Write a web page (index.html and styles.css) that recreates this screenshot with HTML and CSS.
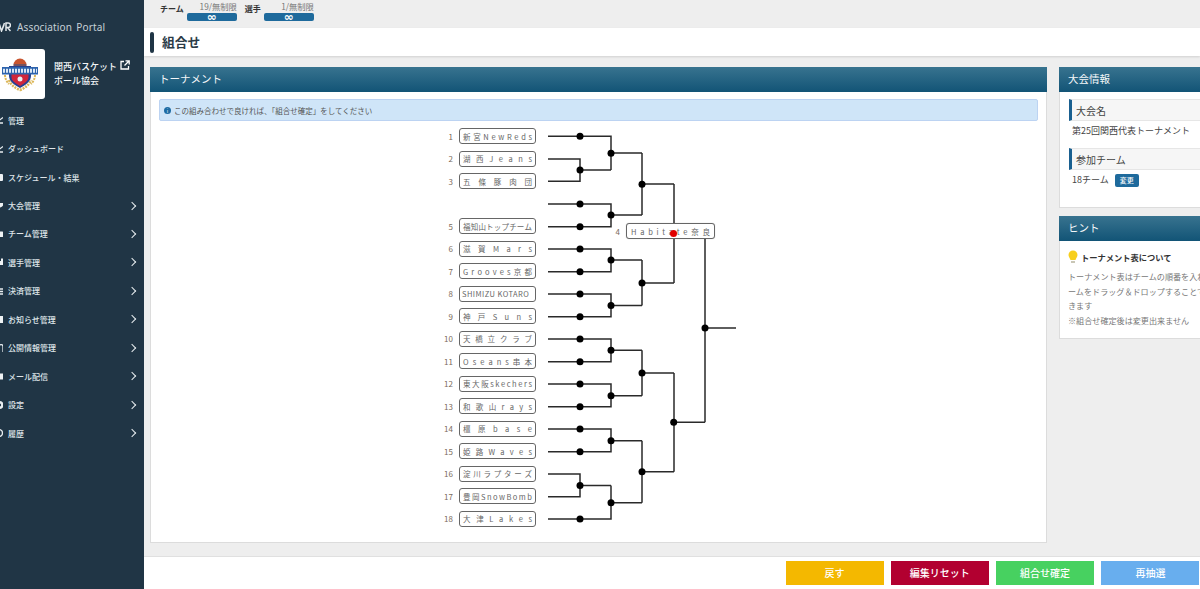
FILE: index.html
```html
<!DOCTYPE html>
<html lang="ja">
<head>
<meta charset="utf-8">
<title>組合せ</title>
<link rel="stylesheet" href="styles.css">
</head>
<body>
<div class="app">
  <aside class="sidebar">
    <div class="brand">
      <svg class="brand-mark" viewBox="0 0 12 10" width="12" height="10"><path d="M0 1l2.500 8 2.500-6M5.500 1l-3 8M7 9V1h2.200a2.200 2.200 0 0 1 0 4.400H7M8.500 5.400L11.500 9" fill="none" stroke="#e4e9ec" stroke-width="1.500"/></svg>
      <span class="brand-name">Association Portal</span>
    </div>
    <div class="org">
      <div class="org-logo">
        <svg viewBox="0 0 36 34" width="36" height="34">
          <path d="M7 22c2 5 6 8 11 10 5-2 9-5 11-10" fill="none" stroke="#dcb75a" stroke-width="2.500" stroke-dasharray="2 1"/>
          <path d="M3 17c0 4 2 7 4 9M33 17c0 4-2 7-4 9" fill="none" stroke="#dcb75a" stroke-width="2" stroke-dasharray="2 1"/>
          <circle cx="18" cy="7" r="6.500" fill="#c9552f"/>
          <path d="M11.500 7h13" stroke="#27528f" stroke-width="1"/>
          <path d="M7 8h22v10c0 5-5 9-11 12-6-3-11-7-11-12z" fill="#27408f"/>
          <path d="M9.500 16h17v3c0 4-4 6-8.500 9-4.500-3-8.500-5-8.500-9z" fill="#d0263b"/>
          <circle cx="18" cy="21" r="2.500" fill="#e8eef5"/>
          <rect x="0" y="9" width="36" height="7.500" fill="#2d63ad"/>
          <path d="M1 12.700h34" stroke="#dbe8f5" stroke-width="4" stroke-dasharray="2 1"/>
        </svg>
      </div>
      <div class="org-name">
        <span>関西バスケット<svg class="ext" viewBox="0 0 10 10" width="10" height="10"><path d="M4 1.500H1v7.500h7.500V6M5.500 .8h3.700v3.700M9 1L4.500 5.500" fill="none" stroke="#fff" stroke-width="1.300"/></svg></span>
        <span>ボール協会</span>
      </div>
    </div>
    <nav class="menu">
      <a class="item"><svg class="ic" viewBox="-5 0 8 8"><path d="M-5 7H3M-1 4.500L3 1.500"/></svg><span>管理</span></a>
      <a class="item"><svg class="ic" viewBox="-5 0 8 8"><path d="M-5 7H3M-1 4.500L3 1.500"/></svg><span>ダッシュボード</span></a>
      <a class="item"><svg class="ic" viewBox="-5 0 8 8"><rect class="fill" x="-4" y="1" width="7" height="7" rx="1"/></svg><span>スケジュール・結果</span></a>
      <a class="item"><svg class="ic" viewBox="-5 0 8 8"><path class="fill" d="M-4 1H3.500C3.500 4 2 5 0 5.500V8H-1V1z"/></svg><span>大会管理</span><b class="chev"></b></a>
      <a class="item"><svg class="ic" viewBox="-5 0 8 8"><rect class="fill" x="-4" y="1.500" width="7" height="5.500" rx=".5"/></svg><span>チーム管理</span><b class="chev"></b></a>
      <a class="item"><svg class="ic" viewBox="-5 0 8 8"><path class="fill" d="M-4 3h5V.5h2V3l1 2-1 2H-4z"/></svg><span>選手管理</span><b class="chev"></b></a>
      <a class="item"><svg class="ic" viewBox="-5 0 8 8"><path d="M-5 2H3.500M-5 4.500H3.500M-5 7H3.500"/></svg><span>決済管理</span><b class="chev"></b></a>
      <a class="item"><svg class="ic" viewBox="-5 0 8 8"><rect class="fill" x="-4" y="1" width="7.500" height="7" rx=".5"/></svg><span>お知らせ管理</span><b class="chev"></b></a>
      <a class="item"><svg class="ic" viewBox="-5 0 8 8"><path d="M-1 8V2.500C-1 0 3 0 3 2.500V8"/></svg><span>公開情報管理</span><b class="chev"></b></a>
      <a class="item"><svg class="ic" viewBox="-5 0 8 8"><path class="fill" d="M-4 1.500H3.500V7.500H-4z"/></svg><span>メール配信</span><b class="chev"></b></a>
      <a class="item"><svg class="ic" viewBox="-5 0 8 8"><circle cx="-.5" cy="4" r="2.800" fill="none" stroke-width="2.400"/></svg><span>設定</span><b class="chev"></b></a>
      <a class="item"><svg class="ic" viewBox="-5 0 8 8"><circle cx="-1" cy="4" r="3.500" fill="none"/></svg><span>履歴</span><b class="chev"></b></a>
    </nav>
  </aside>

  <div class="main">
    <header class="topbar">
      <span class="quota-label">チーム</span>
      <div class="quota"><span class="quota-count">19/無制限</span><span class="pill">∞</span></div>
      <span class="quota-label">選手</span>
      <div class="quota"><span class="quota-count">1/無制限</span><span class="pill">∞</span></div>
    </header>
    <div class="titlebar"><i class="title-mark"></i><h1>組合せ</h1></div>

    <div class="content">
      <section class="panel panel-main">
        <h2 class="panel-head">トーナメント</h2>
        <div class="panel-body">
          <div class="alert"><i class="alert-ic">i</i>この組み合わせで良ければ、「組合せ確定」をしてください</div>
          <div class="bracket-wrap">
            <div class="bracket">
              <svg class="lines" viewBox="440 125 317 405" width="317" height="405">
                <path class="ln" d="M548 136.250H611V170M548 159H580V181.250H548M580 170H611M611 153H642M548 204H611V226.750H548M611 215H642M642 153V215M642 184H674M548 249H611V271.750H548M611 260H642M548 294H611V316.750H548M611 305.500H642M642 260V305.500M642 283H674M674 184V283M705 232V422.300M705 328H736M548 339H611V361.750H548M611 350.300H642M548 384H611V406.750H548M611 395.700H642M642 350.300V395.700M642 373H674M548 429H611V451.750H548M611 440.700H642M548 474H580V496.750H548M580 485.500H611M548 519H611V485.500M611 502.700H642M642 440.700V502.700M642 471.700H674M674 373V471.700M674 422.300H705"/>
                <g class="dots">
                  <circle cx="580" cy="136.250" r="3.500"/><circle cx="580" cy="170" r="3.500"/><circle cx="611" cy="153.300" r="3.500"/>
                  <circle cx="580" cy="204" r="3.500"/><circle cx="580" cy="226.750" r="3.500"/><circle cx="611" cy="215" r="3.500"/><circle cx="642" cy="184.300" r="3.500"/>
                  <circle cx="580" cy="249" r="3.500"/><circle cx="580" cy="271.750" r="3.500"/><circle cx="611" cy="260" r="3.500"/>
                  <circle cx="580" cy="294" r="3.500"/><circle cx="580" cy="316.750" r="3.500"/><circle cx="611" cy="305.500" r="3.500"/><circle cx="642" cy="283" r="3.500"/>
                  <circle cx="705" cy="328" r="3.500"/>
                  <circle cx="580" cy="339" r="3.500"/><circle cx="580" cy="361.750" r="3.500"/><circle cx="611" cy="350.300" r="3.500"/>
                  <circle cx="580" cy="384" r="3.500"/><circle cx="580" cy="406.750" r="3.500"/><circle cx="611" cy="395.700" r="3.500"/><circle cx="642" cy="373" r="3.500"/>
                  <circle cx="580" cy="429" r="3.500"/><circle cx="580" cy="451.750" r="3.500"/><circle cx="611" cy="440.700" r="3.500"/>
                  <circle cx="580" cy="485.500" r="3.500"/><circle cx="580" cy="519" r="3.500"/><circle cx="611" cy="502.700" r="3.500"/><circle cx="642" cy="471.700" r="3.500"/>
                  <circle cx="673.700" cy="422.300" r="3.500"/>
                </g>
              </svg>
              <div class="team-row"><span class="no">1</span><div class="team"><s>新</s><s>宮</s><s>N</s><s>e</s><s>w</s><s>R</s><s>e</s><s>d</s><s>s</s></div></div>
              <div class="team-row"><span class="no">2</span><div class="team"><s>湖</s><s>西</s><s>J</s><s>e</s><s>a</s><s>n</s><s>s</s></div></div>
              <div class="team-row"><span class="no">3</span><div class="team"><s>五</s><s>條</s><s>豚</s><s>肉</s><s>団</s></div></div>
              <div class="team-row"></div>
              <div class="team-row"><span class="no">5</span><div class="team"><s>福</s><s>知</s><s>山</s><s>ト</s><s>ッ</s><s>プ</s><s>チ</s><s>ー</s><s>ム</s></div></div>
              <div class="team-row"><span class="no">6</span><div class="team"><s>滋</s><s>賀</s><s>M</s><s>a</s><s>r</s><s>s</s></div></div>
              <div class="team-row"><span class="no">7</span><div class="team"><s>G</s><s>r</s><s>o</s><s>o</s><s>v</s><s>e</s><s>s</s><s>京</s><s>都</s></div></div>
              <div class="team-row"><span class="no">8</span><div class="team team-fill"><s>SHIMIZU KOTARO</s></div></div>
              <div class="team-row"><span class="no">9</span><div class="team"><s>神</s><s>戸</s><s>S</s><s>u</s><s>n</s><s>s</s></div></div>
              <div class="team-row"><span class="no">10</span><div class="team"><s>天</s><s>橋</s><s>立</s><s>ク</s><s>ラ</s><s>ブ</s></div></div>
              <div class="team-row"><span class="no">11</span><div class="team"><s>O</s><s>s</s><s>e</s><s>a</s><s>n</s><s>s</s><s>串</s><s>本</s></div></div>
              <div class="team-row"><span class="no">12</span><div class="team"><s>東</s><s>大</s><s>阪</s><s>s</s><s>k</s><s>e</s><s>c</s><s>h</s><s>e</s><s>r</s><s>s</s></div></div>
              <div class="team-row"><span class="no">13</span><div class="team"><s>和</s><s>歌</s><s>山</s><s>r</s><s>a</s><s>y</s><s>s</s></div></div>
              <div class="team-row"><span class="no">14</span><div class="team"><s>橿</s><s>原</s><s>b</s><s>a</s><s>s</s><s>e</s></div></div>
              <div class="team-row"><span class="no">15</span><div class="team"><s>姫</s><s>路</s><s>W</s><s>a</s><s>v</s><s>e</s><s>s</s></div></div>
              <div class="team-row"><span class="no">16</span><div class="team"><s>淀</s><s>川</s><s>ラ</s><s>プ</s><s>タ</s><s>ー</s><s>ズ</s></div></div>
              <div class="team-row"><span class="no">17</span><div class="team"><s>豊</s><s>岡</s><s>S</s><s>n</s><s>o</s><s>w</s><s>B</s><s>o</s><s>m</s><s>b</s></div></div>
              <div class="team-row"><span class="no">18</span><div class="team"><s>大</s><s>津</s><s>L</s><s>a</s><s>k</s><s>e</s><s>s</s></div></div>
              <div class="float-team">
                <span class="no">4</span>
                <div class="team team-wide"><s>H</s><s>a</s><s>b</s><s>i</s><s>t</s><s>a</s><s>t</s><s>e</s><s>奈</s><s>良</s></div>
                <i class="red-dot"></i>
              </div>
            </div>
          </div>
        </div>
      </section>

      <div class="side">
        <section class="panel panel-info">
          <h2 class="panel-head">大会情報</h2>
          <div class="panel-body info-body">
            <h3 class="sub">大会名</h3>
            <p class="info-text">第25回関西代表トーナメント</p>
            <h3 class="sub sub-2">参加チーム</h3>
            <p class="info-text info-row">18チーム<button class="mini">変更</button></p>
          </div>
        </section>
        <section class="panel panel-hint">
          <h2 class="panel-head">ヒント</h2>
          <div class="panel-body hint-body">
            <div class="hint-title">
              <svg viewBox="0 0 10 14" width="10" height="14"><path d="M5 .5a4.500 4.500 0 0 0-4.500 4.500c0 2 1.500 3 2 5h5c.5-2 2-3 2-5A4.500 4.500 0 0 0 5 .5z" fill="#f7cf1d"/><path d="M3 11h4v2H3z" fill="#c9c6b5"/></svg>
              <b>トーナメント表について</b>
            </div>
            <p>トーナメント表はチームの順番を入れ替えたいチ<br>ームをドラッグ＆ドロップすることで入れ替えることがで<br>きます<br>※組合せ確定後は変更出来ません</p>
          </div>
        </section>
      </div>
    </div>

    <footer class="footer">
      <button class="act act-back">戻す</button>
      <button class="act act-reset">編集リセット</button>
      <button class="act act-ok">組合せ確定</button>
      <button class="act act-redo">再抽選</button>
    </footer>
  </div>
</div>
</body>
</html>
```

FILE: styles.css
```css
* { box-sizing: border-box; }
html, body { margin: 0; height: 589px; overflow: hidden; }
body { font-family: "Noto Sans CJK JP", "Noto Sans", sans-serif; color: #333; background: #eee; }
h1, h2, h3, p { margin: 0; font-weight: 400; }
i { font-style: normal; }
s { text-decoration: none; }

.app { display: flex; width: 1200px; height: 589px; overflow: hidden; }

/* sidebar */
.sidebar { flex: 0 0 144px; background: #203545; color: #fff; overflow: hidden; }
.brand { display: flex; align-items: center; height: 49px; padding-top: 4px; gap: 6px; margin-left: -1px; }
.brand-mark { flex: none; }
.brand-name { font-family: "Noto Sans", sans-serif; font-size: 10px; letter-spacing: .15px; word-spacing: 1.500px; color: #c6d0d6; white-space: nowrap; }
.org { display: flex; align-items: center; gap: 9px; height: 50px; margin-left: -5px; }
.org-logo { flex: none; width: 50px; height: 50px; background: #fff; border-radius: 3px; display: flex; align-items: center; justify-content: center; padding-top: 1px; }
.org-name { display: flex; flex-direction: column; gap: 3px; margin-top: -2px; font-size: 9px; line-height: 11px; font-weight: 500; color: #f2f5f7; white-space: nowrap; }
.ext { vertical-align: 0; margin-left: 3px; }
.menu { display: grid; grid-auto-rows: 28.450px; margin-top: 7px; }
.item { display: flex; align-items: center; font-size: 8px; font-weight: 500; color: #dfe5e9; margin-left: -5px; position: relative; }
.item span { margin-left: 5px; white-space: nowrap; }
.ic { flex: none; width: 8px; height: 8px; fill: none; stroke: #e8edf0; stroke-width: 1.300; }
.ic .fill { fill: #eef2f4; stroke: none; }
.chev { position: absolute; left: 134px; width: 6px; height: 6px; border-top: 1.500px solid #e8edf0; border-right: 1.500px solid #e8edf0; transform: rotate(45deg); }

/* main column */
.main { flex: 1; min-width: 0; display: flex; flex-direction: column; }
.topbar { flex: none; height: 28px; display: flex; align-items: flex-start; padding-left: 16px; color: #333; }
.quota-label { font-size: 8px; font-weight: 700; line-height: 12px; margin-top: 3px; margin-right: 3px; }
.quota { display: flex; flex-direction: column; width: 50px; align-items: flex-end; margin-right: 8px; }
.quota-count { font-size: 8.250px; line-height: 12px; color: #777; white-space: nowrap; }
.pill { width: 50px; height: 8px; margin-top: 1px; background: #1e6a9c; color: #fff; border-radius: 2px; text-align: center; font: 700 12px/8px "DejaVu Sans", sans-serif; }
.titlebar { flex: none; height: 28px; margin-bottom: 1px; background: #fff; display: flex; align-items: center; padding-left: 6px; gap: 8px; box-shadow: 0 1px 2px rgba(0,0,0,.12); }
.title-mark { width: 4px; height: 21px; background: #1f3545; border-radius: 2px; }
.titlebar h1 { font-size: 12.750px; line-height: 20px; font-weight: 700; color: #2b3b47; }

.content { flex: 1; min-height: 0; display: flex; align-items: stretch; gap: 12px; padding: 10px 0 13px 6px; }
.panel { background: #fff; border: 1px solid #dcdcdc; }
.panel-main { flex: 0 0 897px; }
.panel-head { height: 25px; margin: -1px -1px 0; padding-left: 9px; font-size: 10.500px; line-height: 23px; color: #f4f7f9; background: linear-gradient(#38738f, #125476); }
.panel-body { padding: 7px 8px; }
.alert { display: flex; align-items: center; height: 22px; padding-left: 4px; font-size: 7.500px; color: #555; background: #cfe5f8; border: 1px solid #bcd3f2; border-radius: 2px; }
.alert-ic { width: 7px; height: 7px; margin-right: 3px; border-radius: 50%; background: #1d6ca3; color: #fff; font-size: 5px; line-height: 7px; text-align: center; }

/* bracket */
.bracket-wrap { display: flex; justify-content: center; margin-top: 4px; }
.bracket { position: relative; width: 317px; display: grid; grid-auto-rows: 22.500px; }
.lines { position: absolute; left: 0; top: 0; }
.ln { fill: none; stroke: #2a2a2a; stroke-width: 1.500; }
.dots circle { fill: #000; }
.team-row { display: flex; align-items: center; }
.no { width: 13px; margin-right: 6px; text-align: right; font-size: 8px; color: #7a6a5a; }
.team { width: 77px; height: 16px; display: flex; justify-content: space-between; align-items: center; padding: 0 3px; font-size: 7.500px; white-space: nowrap; color: #666; background: #fff; border: 1px solid #666; border-radius: 3px; }
.team-fill { letter-spacing: .45px; padding: 0 2px; }
.float-team { position: absolute; left: 175px; top: 98px; display: flex; align-items: center; }
.float-team .no { width: 5px; margin-right: 6px; }
.team-wide { width: 89px; padding: 0 4px; box-shadow: 0 0 1px rgba(0,0,0,.3); }
.red-dot { position: absolute; left: 55px; top: 7px; width: 7px; height: 7px; border-radius: 50%; background: #e00000; }

/* side */
.side { flex: 0 0 200px; display: flex; flex-direction: column; gap: 8px; }
.info-body { height: 115px; padding: 7px 9px; }
.sub { height: 22px; padding-left: 4px; font-size: 10px; line-height: 21px; color: #444; background: #f6f6f6; border-left: 3px solid #1a6090; border-top: 1px solid #e6e6e6; border-bottom: 1px solid #e6e6e6; }
.sub-2 { margin-top: 10px; }
.info-text { font-size: 9px; line-height: 14px; margin: 3px 0 0 3px; color: #444; }
.info-row { display: flex; align-items: center; margin-top: 3px; }
.mini { width: 24px; height: 13px; margin-left: 6px; padding: 0; border: 0; border-radius: 2px; background: #1e6a9c; color: #fff; font: 500 7px/13px "Noto Sans CJK JP", sans-serif; }
.panel-hint { height: 123px; }
.hint-body { padding: 9px 8px; }
.hint-title { display: flex; align-items: center; gap: 3px; font-size: 8.250px; color: #333; white-space: nowrap; }
.hint-body p { margin-top: 6px; font-size: 8.100px; line-height: 14.700px; color: #777; white-space: nowrap; width: 180px; }

/* footer */
.footer { flex: none; height: 33px; display: flex; gap: 5.300px; align-items: center; background: #fff; border-top: 1px solid #e0e0e0; padding-left: 640.500px; }
.act { flex: none; width: 100px; height: 26px; border: 1px solid #fff; padding: 0; color: #fff; font: 500 10px/24px "Noto Sans CJK JP", sans-serif; }
.act-back { background: #f4b800; }
.act-reset { background: #b20030; }
.act-ok { background: #47d160; }
.act-redo { background: #68aeee; }
```
